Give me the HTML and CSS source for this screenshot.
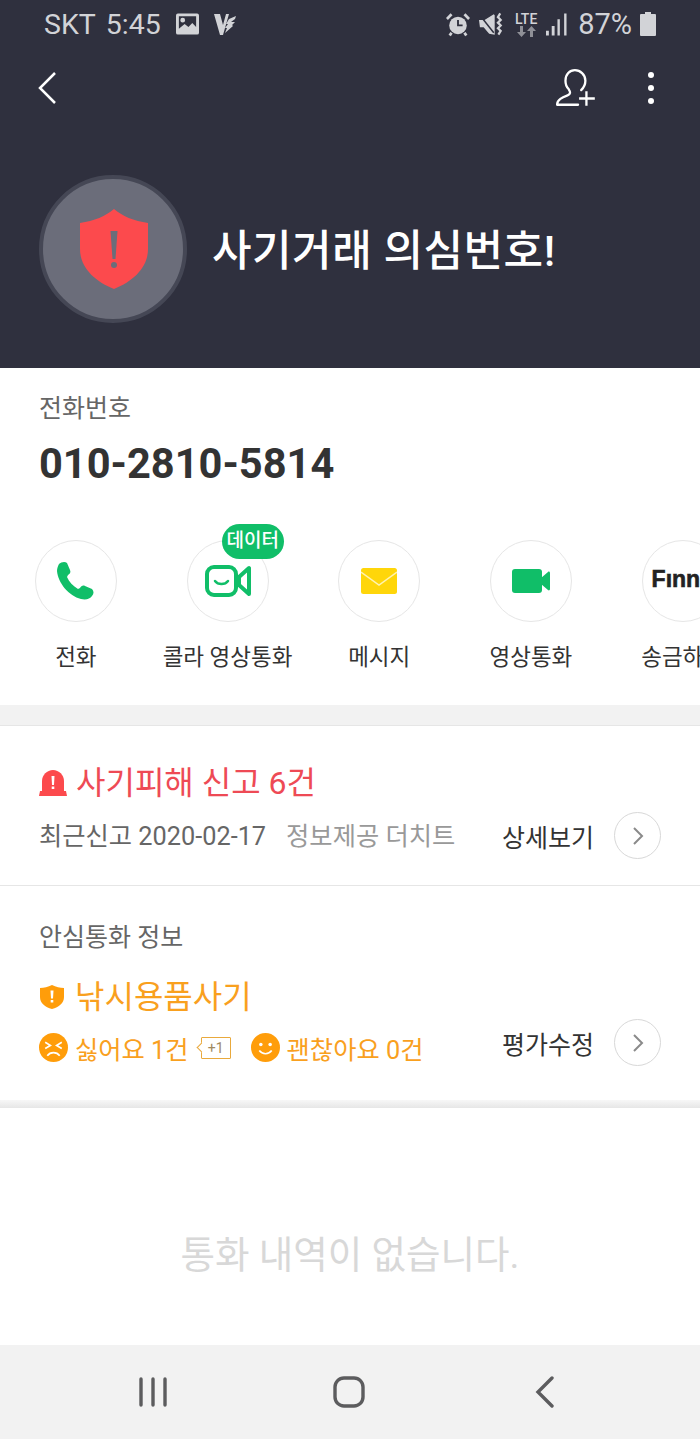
FILE: index.html
```html
<!DOCTYPE html>
<html lang="ko">
<head>
  <meta charset="UTF-8">
  <meta name="viewport" content="width=device-width, initial-scale=1.0">
  <title>사기거래 의심번호</title>
  <link rel="stylesheet" href="styles.css">
</head>
<body>
  <div id="phone">
    <header class="top">
      <div class="status">
        <div class="status-left">
          <span>SKT</span>
          <span>5:45</span>
          <svg class="st-pic" width="23" height="22" viewBox="0 0 24 22"><path fill="#d2d3d7" fill-rule="evenodd" d="M2 0h20a2 2 0 0 1 2 2v18a2 2 0 0 1-2 2H2a2 2 0 0 1-2-2V2a2 2 0 0 1 2-2zm1 3v13l6-5 4 3 4-4 4 4V3zm4 1.500a2.500 2.500 0 1 1 0 5 2.500 2.500 0 0 1 0-5z"/></svg>
          <svg class="st-v" width="22" height="22" viewBox="0 0 22 22"><path fill="#d2d3d7" d="M0 1h6l3 11 3-11h3L9 22H6z"/><path fill="#d2d3d7" d="M15 6l7-3-1 3-4 3h4l-3 3 1 1-8 7 2-5h-2l3-4h-2z"/></svg>
        </div>
        <div class="status-right">
          <svg width="24" height="25" viewBox="0 0 26 26"><circle cx="13" cy="14" r="9.500" fill="#d2d3d7"/><path d="M13 8v6h5" fill="none" stroke="#2f303e" stroke-width="2"/><path d="M1 7l5-5M25 7l-5-5M6 22l-2 3M20 22l2 3" stroke="#d2d3d7" stroke-width="3" fill="none"/></svg>
          <svg width="24" height="25" viewBox="0 0 26 26"><path fill="#d2d3d7" d="M0 8h6l10-6 1 1v21l-6-1-6-7H1z"/><path d="M1 3l15 19" stroke="#2f303e" stroke-width="1.600"/><path d="M23 1l-2.500 4 3 3-3 3 3 3-3 3 3 3-2.500 4" fill="none" stroke="#d2d3d7" stroke-width="2.400"/></svg>
          <div class="lte">
            <span>LTE</span>
            <svg width="24" height="11" viewBox="0 0 24 11"><path fill="#8f9097" d="M4 0h3v6h3l-4.500 5L1 6h3zM17 11h-3V5h-3l4.500-5L20 5h-3z" transform="translate(2 0)"/></svg>
          </div>
          <svg width="21" height="23" viewBox="0 0 22 23"><path fill="#d2d3d7" d="M0 18h3v5H0zM6 13h3v10H6zM12 6h2.500v17H12zM19 0h2.500v23H19z"/></svg>
          <span class="pct">87%</span>
          <svg width="16" height="24" viewBox="0 0 16 24"><path fill="#d2d3d7" d="M5 0h6v2h4a1 1 0 0 1 1 1v20a1 1 0 0 1-1 1H1a1 1 0 0 1-1-1V3a1 1 0 0 1 1-1h4z"/></svg>
        </div>
      </div>
      <div class="toolbar">
        <svg class="back" width="20" height="34" viewBox="0 0 20 34"><path d="M18 2L3 17l15 15" fill="none" stroke="#fff" stroke-width="2.500"/></svg>
        <div class="toolbar-right">
          <svg width="44" height="38" viewBox="0 0 42 36"><path d="M2 34c0-5 5-7 10-9 3-1 3-3 1-6-2-2-3-5-3-8 0-6 4-10 9-10s10 4 10 10c0 4-2 7-4 9m-23 14h20" fill="none" stroke="#fff" stroke-width="2.200" stroke-linecap="round"/><path d="M30 21v14M23 28h15" fill="none" stroke="#fff" stroke-width="2.200"/></svg>
          <div class="dots"><i></i><i></i><i></i></div>
        </div>
      </div>
      <div class="profile">
        <div class="avatar">
          <svg width="68" height="80" viewBox="0 0 68 80"><path fill="#fc4a4d" d="M34 0c8 7 20 12 34 14v26c0 18-14 32-34 40C14 72 0 58 0 40V14C14 12 26 7 34 0z"/><path fill="#6b6d7a" d="M30.500 22h7l-2 28h-3z"/><circle cx="34" cy="56" r="3" fill="#6b6d7a"/></svg>
        </div>
        <h1>사기거래 의심번호!</h1>
      </div>
    </header>

    <section class="info">
      <div class="phone-label">전화번호</div>
      <div class="phone-number">010-2810-5814</div>
      <div class="actions">
        <div class="action">
          <div class="circle">
            <svg width="40" height="40" viewBox="0 0 40 40"><path fill="#10be68" d="M3 3c2-2 6-3 8-1l3 7c1 2 0 4-2 5l-1 2c2 5 6 9 11 12l2-1c1-2 3-3 5-2l7 3c2 2 2 5 0 7-2 3-6 4-11 3C13 35 2 22 1 10c0-3 1-5 2-7z"/></svg>
          </div>
          <div class="action-label">전화</div>
        </div>
        <div class="action">
          <div class="circle">
            <svg width="46" height="32" viewBox="0 0 46 32"><rect x="2" y="2" width="29" height="28" rx="7" fill="none" stroke="#10be68" stroke-width="4"/><path d="M10 16c3 4 10 4 13 0" fill="none" stroke="#10be68" stroke-width="2.500" stroke-linecap="round"/><path d="M34 12l10-9v26l-10-9z" fill="none" stroke="#10be68" stroke-width="4" stroke-linejoin="round"/></svg>
          </div>
          <span class="badge">데이터</span>
          <div class="action-label">콜라 영상통화</div>
        </div>
        <div class="action">
          <div class="circle">
            <svg width="36" height="26" viewBox="0 0 36 26"><rect width="36" height="26" rx="2.500" fill="#ffd60a"/><path d="M0 4l18 13L36 4" fill="none" stroke="#fff3b0" stroke-width="1.500"/></svg>
          </div>
          <div class="action-label">메시지</div>
        </div>
        <div class="action">
          <div class="circle">
            <svg width="38" height="24" viewBox="0 0 38 24"><rect width="30" height="24" rx="3" fill="#10be68"/><path d="M29 9l7-6c1-1 2 0 2 1v16c0 1-1 2-2 1l-7-6z" fill="#10be68"/></svg>
          </div>
          <div class="action-label">영상통화</div>
        </div>
        <div class="action">
          <div class="circle circle-left">
            <span class="finnq">Fınnq</span>
          </div>
          <div class="action-label">송금하기</div>
        </div>
      </div>
    </section>

    <div class="band"></div>

    <section class="row report">
      <div class="title red">
        <svg width="28" height="26" viewBox="0 0 28 26"><path fill="#fc4a4d" d="M3 23V11C3 5 8 0 14 0s11 5 11 11v12z"/><path fill="#fc4a4d" d="M1 21h26l1 5H0z"/><path fill="#fff" d="M12.500 6h3l-.5 9h-2zM12.700 16.500h2.600v2.600h-2.600z"/></svg>
        <span>사기피해 신고 6건</span>
      </div>
      <div class="row-bottom">
        <div class="sub"><span>최근신고 2020-02-17</span><span class="provider">정보제공 더치트</span></div>
        <div class="more">
          <span>상세보기</span>
          <div class="arrow"><svg width="12" height="20" viewBox="0 0 12 20"><path d="M2 2l8 8-8 8" fill="none" stroke="#8a8a8a" stroke-width="2"/></svg></div>
        </div>
      </div>
    </section>

    <section class="row safe">
      <div class="safe-label">안심통화 정보</div>
      <div class="title orange">
        <svg width="26" height="26" viewBox="0 0 26 26"><path fill="#ff9d0a" d="M13 1c4 2 8 3 12 3v9c0 6-5 10-12 12C6 23 1 19 1 13V4c4 0 8-1 12-3z"/><path fill="#fff" d="M11.500 6.500h3l-.5 8h-2zM11.700 16h2.600v2.600h-2.600z"/></svg>
        <span>낚시용품사기</span>
      </div>
      <div class="row-bottom safe-bottom">
        <div class="votes">
          <svg width="29" height="29" viewBox="0 0 28 28"><circle cx="14" cy="14" r="14" fill="#ff9d0a"/><path d="M6 9l5 3-5 3M22 9l-5 3 5 3M8 22c3-4 9-4 12 0" fill="none" stroke="#fff" stroke-width="1.600"/></svg>
          <span>싫어요 1건</span>
          <span class="plus">+1</span>
          <svg class="smile" width="29" height="29" viewBox="0 0 28 28"><circle cx="14" cy="14" r="14" fill="#ff9d0a"/><circle cx="9.500" cy="11" r="1.700" fill="#fff"/><circle cx="18.500" cy="11" r="1.700" fill="#fff"/><path d="M8 17c3 4 9 4 12 0" fill="none" stroke="#fff" stroke-width="1.600"/></svg>
          <span>괜찮아요 0건</span>
        </div>
        <div class="more edit">
          <span>평가수정</span>
          <div class="arrow"><svg width="12" height="20" viewBox="0 0 12 20"><path d="M2 2l8 8-8 8" fill="none" stroke="#8a8a8a" stroke-width="2"/></svg></div>
        </div>
      </div>
    </section>

    <div class="band-thin"></div>

    <section class="history">통화 내역이 없습니다.</section>

    <nav class="navbar">
      <svg width="30" height="30" viewBox="0 0 30 30"><path d="M3 2v26M15 2v26M27 2v26" stroke="#5c5c5e" stroke-width="3.400" stroke-linecap="round"/></svg>
      <svg width="32" height="32" viewBox="0 0 32 32"><rect x="2" y="2" width="28" height="28" rx="9" fill="none" stroke="#5c5c5e" stroke-width="3.400"/></svg>
      <svg width="20" height="32" viewBox="0 0 20 32"><path d="M17 2L3 16l14 14" fill="none" stroke="#5c5c5e" stroke-width="3.400" stroke-linecap="round"/></svg>
    </nav>
  </div>
</body>
</html>
```

FILE: styles.css
```css
* {
  box-sizing: border-box;
}

body {
  margin: 0;
  padding: 0;
  background-color: #fff;
  font-family: Roboto, 'Noto Sans CJK KR', sans-serif;
}

#phone {
  width: 700px;
  height: 1439px;
  overflow: hidden;
  display: flex;
  flex-direction: column;
}

/* Header */
.top {
  height: 368px;
  flex: none;
  background-color: #2f303e;
  padding: 0 41px 0 39px;
}

.status {
  height: 48px;
  display: flex;
  justify-content: space-between;
  align-items: center;
  padding-left: 5px;
  color: #d2d3d7;
  font-size: 28.500px;
}

.status-left,
.status-right {
  display: flex;
  align-items: center;
}

.status-left span + span {
  margin-left: 10px;
}

.st-pic {
  margin-left: 15px;
}

.st-v {
  margin-left: 15px;
}

.status-right {
  gap: 9px;
  margin-right: 3px;
}

.lte {
  width: 24px;
  margin-left: 2px;
  margin-right: -1px;
  display: flex;
  flex-direction: column;
  align-items: center;
  font-size: 14px;
  font-weight: 500;
  line-height: 14px;
}

.lte svg {
  display: block;
}

.pct {
  margin-left: 2px;
  margin-right: -1px;
  font-size: 29px;
}

.toolbar {
  height: 80px;
  margin-left: -2px;
  margin-right: 5px;
  display: flex;
  justify-content: space-between;
  align-items: center;
}

.toolbar-right {
  display: flex;
  align-items: center;
  gap: 49px;
}

.dots {
  display: flex;
  flex-direction: column;
  gap: 7px;
}

.dots i {
  display: block;
  width: 6px;
  height: 6px;
  border-radius: 50%;
  background-color: #fff;
}

.profile {
  display: flex;
  align-items: center;
  gap: 25px;
  margin-top: 47px;
}

.avatar {
  width: 148px;
  height: 148px;
  flex: none;
  border-radius: 50%;
  background-color: #6b6d7a;
  border: 4px solid #454755;
  padding-left: 2px;
  display: flex;
  align-items: center;
  justify-content: center;
}

h1 {
  margin: 0 0 4px;
  color: #fff;
  font-size: 43px;
  font-weight: 500;
  letter-spacing: 0.5px;
  white-space: nowrap;
}

/* Phone number and actions */
.info {
  height: 337px;
  flex: none;
  padding-top: 24px;
}

.phone-label {
  margin-left: 39px;
  color: #666;
  font-size: 25px;
  line-height: 34px;
}

.phone-number {
  margin-left: 39px;
  margin-top: 14px;
  color: #333;
  font-size: 41.600px;
  font-weight: 700;
  line-height: 48px;
  white-space: nowrap;
}

.actions {
  display: flex;
  margin-top: 52px;
}

.action {
  position: relative;
  width: 151.700px;
  flex: none;
  display: flex;
  flex-direction: column;
  align-items: center;
}

.circle {
  width: 82px;
  height: 82px;
  border-radius: 50%;
  border: 1px solid #e6e6e6;
  display: flex;
  align-items: center;
  justify-content: center;
  overflow: hidden;
}

.circle-left {
  justify-content: flex-start;
  padding-left: 9px;
}

.badge {
  position: absolute;
  left: 70px;
  top: -16px;
  width: 62px;
  height: 35px;
  border-radius: 18px;
  background-color: #10be68;
  color: #fff;
  font-size: 19px;
  font-weight: 500;
  line-height: 33px;
  text-align: center;
}

.action-label {
  margin-top: 18px;
  color: #333;
  font-size: 22.500px;
  line-height: 34px;
  white-space: nowrap;
}

.finnq {
  margin-bottom: 4px;
  color: #222;
  font-family: 'Liberation Sans', sans-serif;
  font-size: 23px;
  font-weight: 700;
  -webkit-text-stroke: 0.6px #222;
  white-space: nowrap;
}

/* Bands */
.band {
  height: 21px;
  flex: none;
  background-color: #f2f2f2;
  border-bottom: 1px solid #e6e6e6;
}

.band-thin {
  height: 8px;
  flex: none;
  background: linear-gradient(#f7f7f7, #e6e6e6);
}

/* Report rows */
.row {
  flex: none;
  padding: 0 39px;
}

.report {
  height: 160px;
  padding-top: 35px;
  border-bottom: 1px solid #e6e6e6;
}

.safe {
  height: 214px;
  padding-top: 34px;
}

.safe-label {
  margin-bottom: 19px;
  color: #666;
  font-size: 25px;
  line-height: 36px;
}

.title {
  display: flex;
  align-items: center;
  gap: 9px;
  font-size: 32px;
  line-height: 44px;
}

.title.red {
  color: #ee4a55;
}

.title.orange {
  gap: 10px;
  color: #f9a01e;
}

.row-bottom {
  display: flex;
  justify-content: space-between;
  align-items: center;
  margin-top: 7px;
}

.safe-bottom {
  margin-top: 10px;
}

.sub {
  margin-bottom: 4px;
  color: #666;
  font-size: 25.300px;
  white-space: nowrap;
}

.provider {
  margin-left: 20px;
  color: #999;
}

.more {
  display: flex;
  align-items: center;
  gap: 20px;
  color: #333;
  font-size: 25px;
  white-space: nowrap;
}

.arrow {
  width: 47px;
  height: 47px;
  border-radius: 50%;
  border: 1.500px solid #d8d8d8;
  display: flex;
  align-items: center;
  justify-content: center;
}

.votes {
  display: flex;
  align-items: center;
  gap: 7px;
  color: #f9a01e;
  font-size: 25.300px;
  white-space: nowrap;
}

.plus {
  position: relative;
  width: 30px;
  height: 22px;
  margin-left: 5px;
  border: 1px solid #e9a93c;
  border-radius: 1px;
  color: #a08a60;
  font-size: 14px;
  line-height: 20px;
  text-align: center;
}

/* little notch on the left of the +1 tag */
.plus::before {
  content: "";
  position: absolute;
  left: -4px;
  top: 6px;
  width: 6px;
  height: 6px;
  background-color: #fff;
  border-left: 1px solid #e9a93c;
  border-bottom: 1px solid #e9a93c;
  transform: rotate(45deg);
}

.smile {
  margin-left: 13px;
}

.edit {
  margin-top: -10px;
}

/* Empty history */
.history {
  flex: 1;
  display: flex;
  align-items: center;
  justify-content: center;
  padding-top: 50px;
  color: #d8d8d8;
  font-size: 37.500px;
}

/* Bottom navigation */
.navbar {
  height: 94px;
  flex: none;
  background-color: #f2f2f2;
  display: flex;
  align-items: center;
  padding-left: 138px;
}

.navbar svg:nth-child(2) {
  margin-left: 165px;
}

.navbar svg:nth-child(3) {
  margin-left: 170px;
}
```
